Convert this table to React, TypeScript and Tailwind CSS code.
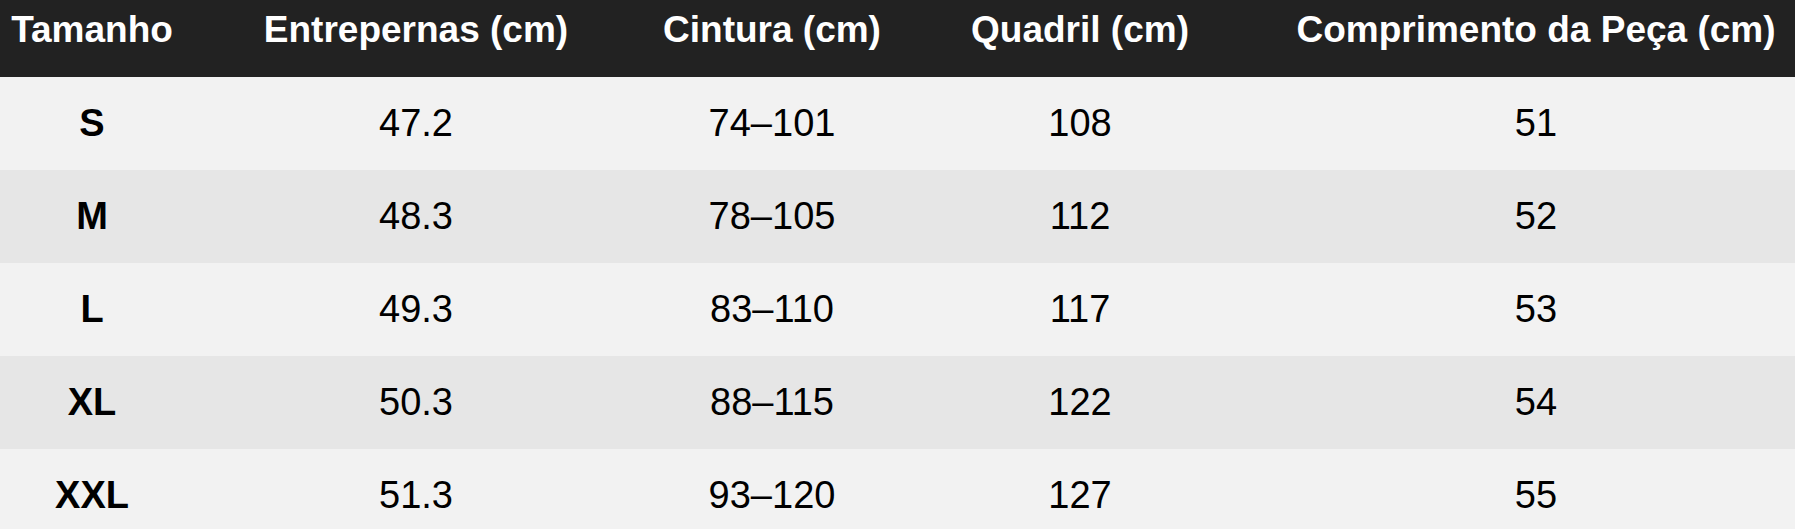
import React from 'react';

const headers = ['Tamanho', 'Entrepernas (cm)', 'Cintura (cm)', 'Quadril (cm)', 'Comprimento da Peça (cm)'];

const rows = [
  ['S', '47.2', '74–101', '108', '51'],
  ['M', '48.3', '78–105', '112', '52'],
  ['L', '49.3', '83–110', '117', '53'],
  ['XL', '50.3', '88–115', '122', '54'],
  ['XXL', '51.3', '93–120', '127', '55'],
];

const cols = 'grid grid-cols-[184px_464px_248px_368px_1fr]';

export default function App() {
  return (
    <div className="w-[1795px] h-[529px] overflow-hidden bg-white font-['Liberation_Sans',Arial,sans-serif]">
      {/* cabeçalho */}
      <div className={`${cols} h-[77px] bg-[#222222] text-white text-[37px] font-bold leading-[42px]`}>
        {headers.map((h, j) => (
          <div key={h} className={`flex justify-center pt-[9px] whitespace-nowrap ${j === 4 ? 'pl-[13px]' : ''}`}>
            {h}
          </div>
        ))}
      </div>

      {rows.map((r, i) => (
        <div
          key={r[0]}
          className={`${cols} h-[93px] text-black text-[38px] leading-[43px] ${i % 2 === 0 ? 'bg-[#f2f2f2]' : 'bg-[#e6e6e6]'}`}
        >
          {r.map((c, j) => (
            <div
              key={j}
              className={`flex items-center justify-center whitespace-nowrap ${j === 0 ? 'font-bold' : ''} ${j === 4 ? 'pl-[13px]' : ''}`}
            >
              {c}
            </div>
          ))}
        </div>
      ))}
    </div>
  );
}
